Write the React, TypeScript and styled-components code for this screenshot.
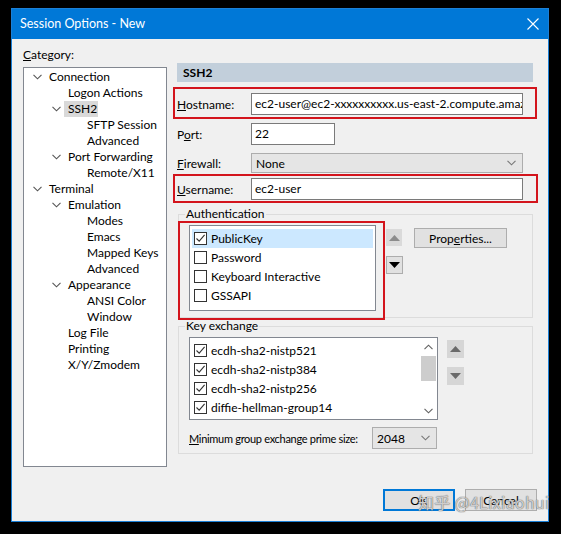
import React from 'react';
import styled, { createGlobalStyle } from 'styled-components';

const Global = createGlobalStyle`
  html, body { margin: 0; padding: 0; background: #000; }
  body {
    width: 561px; height: 534px; overflow: hidden;
    font-family: Lato, "Noto Sans", sans-serif;
    font-size: 12px; color: #000;
  }
  * { box-sizing: border-box; }
`;

const Stage = styled.div`
  width: 561px;
  height: 534px;
  background: #000;
  padding: 8px 0 0 11px;
`;

const Window = styled.div`
  position: relative;
  width: 538px;
  height: 514px;
  border: 1px solid #1c80d6;
  background: #f0f0f0;
  display: flex;
  flex-direction: column;
`;

const TitleBar = styled.div`
  height: 30px;
  flex: none;
  background: #0078d7;
  color: #fff;
  display: flex;
  align-items: center;
  justify-content: space-between;
  padding: 0 9px 1px 8px;
  font-size: 12.5px;
`;

const Body = styled.div`
  flex: 1;
  display: flex;
  flex-direction: column;
  padding: 8px 11px 10px 11px;
`;

const Main = styled.div`
  display: flex;
  gap: 10px;
`;

const LeftCol = styled.div`
  width: 144px;
  display: flex;
  flex-direction: column;
`;

const CategoryLabel = styled.div`
  line-height: 16px;
  height: 20px;
`;

const Tree = styled.div`
  height: 400px;
  background: #fff;
  border: 1px solid #828790;
  padding-top: 1px;
`;

const TreeItem = styled.div<{ $level: number }>`
  display: flex;
  align-items: center;
  height: 16px;
  line-height: 16px;
  padding-left: ${p => 6 + p.$level * 19}px;
  white-space: nowrap;
`;

const ChevronSlot = styled.span`
  width: 14px;
  margin-right: 5px;
  display: flex;
  align-items: center;
  justify-content: center;
  flex: none;
`;

const TreeLabel = styled.span<{ $selected?: boolean }>`
  background: ${p => (p.$selected ? '#d9d9d9' : 'transparent')};
  margin-left: ${p => (p.$selected ? '-4px' : '0')};
  padding: ${p => (p.$selected ? '0 1px 0 4px' : '0')};
`;

const RightCol = styled.div`
  width: 356px;
  margin-top: 16px;
  display: flex;
  flex-direction: column;
`;

const Header = styled.div`
  height: 19px;
  line-height: 19px;
  background: #c2cfdb;
  font-weight: bold;
  padding-left: 6px;
`;

const Row = styled.div`
  display: flex;
  align-items: center;
`;

const Spaced = styled.div<{ $mt: number }>`
  margin-top: ${p => p.$mt}px;
`;

const Highlight = styled.div<{ $t: number; $r: number; $b: number; $l: number; $mt?: number }>`
  position: relative;
  margin-top: ${p => p.$mt ?? 0}px;
  &::after {
    content: '';
    position: absolute;
    top: ${p => -p.$t}px;
    right: ${p => -p.$r}px;
    bottom: ${p => -p.$b}px;
    left: ${p => -p.$l}px;
    border: 2px solid #d3141c;
    pointer-events: none;
  }
`;

const FieldLabel = styled.span`
  width: 74px;
  flex: none;
`;

const TextInput = styled.div<{ $w: number }>`
  width: ${p => p.$w}px;
  height: 22px;
  background: #fff;
  border: 1px solid #7a7a7a;
  line-height: 20px;
  padding-left: 3px;
  white-space: nowrap;
  overflow: hidden;
`;

const Select = styled.div<{ $w: number; $h: number }>`
  width: ${p => p.$w}px;
  height: ${p => p.$h}px;
  background: #e5e5e5;
  border: 1px solid #adadad;
  display: flex;
  align-items: center;
  justify-content: space-between;
  padding: 0 6px 0 4px;
  flex: none;
`;

const Group = styled.fieldset<{ $mt: number; $pb: number }>`
  margin: ${p => p.$mt}px 0 0 1px;
  border: 1px solid #dcdcdc;
  padding: 4px 9px ${p => p.$pb}px 10px;
  min-width: 0;
`;

const Legend = styled.legend`
  padding: 0 1px;
  margin-left: -4px;
  line-height: 14px;
`;

const GroupRow = styled.div`
  display: flex;
  align-items: flex-start;
`;

const ListBox = styled.div<{ $w: number; $h: number }>`
  width: ${p => p.$w}px;
  height: ${p => p.$h}px;
  background: #fff;
  border: 1px solid #828790;
  padding: 3px 2px 0 2px;
  overflow: hidden;
  position: relative;
  flex: none;
`;

const CheckRow = styled.div<{ $selected?: boolean }>`
  height: 19px;
  display: flex;
  align-items: center;
  padding-left: 2px;
  background: ${p => (p.$selected ? '#cce8ff' : 'transparent')};
  white-space: nowrap;
`;

const Box = styled.span`
  width: 13px;
  height: 13px;
  border: 1px solid #333;
  background: #fff;
  margin-right: 4px;
  flex: none;
  display: flex;
  align-items: center;
  justify-content: center;
`;

const ArrowCol = styled.div<{ $ml: number; $gap: number; $mt: number }>`
  display: flex;
  flex-direction: column;
  gap: ${p => p.$gap}px;
  margin-left: ${p => p.$ml}px;
  margin-top: ${p => p.$mt}px;
`;

const ArrowBtn = styled.div<{ $h: number; $w: number; $enabled?: boolean; $bg: string }>`
  width: ${p => p.$w}px;
  height: ${p => p.$h}px;
  background: ${p => p.$bg};
  border: 1px solid ${p => (p.$enabled ? '#adadad' : p.$bg)};
  display: flex;
  align-items: center;
  justify-content: center;
`;

const Button = styled.div<{ $default?: boolean; $w: number; $h: number }>`
  width: ${p => p.$w}px;
  height: ${p => p.$h}px;
  background: #e1e1e1;
  border: ${p => (p.$default ? '2px solid #0078d7' : '1px solid #adadad')};
  display: flex;
  align-items: center;
  justify-content: center;
  flex: none;
`;

const PropsButton = styled(Button)`
  margin-left: 11px;
  margin-top: 3px;
`;

const Scrollbar = styled.div`
  position: absolute;
  top: 0;
  right: 0;
  bottom: 0;
  width: 17px;
  background: #fff;
  display: flex;
  flex-direction: column;
  align-items: center;
`;

const ScrollArrow = styled.div`
  height: 17px;
  width: 17px;
  display: flex;
  align-items: center;
  justify-content: center;
`;

const Thumb = styled.div`
  width: 15px;
  height: 25px;
  background: #cdcdcd;
  margin-top: 1px;
`;

const ScrollSpacer = styled.div`
  flex: 1;
`;

const MinRow = styled.div`
  display: flex;
  align-items: center;
  margin-top: 7px;
  white-space: nowrap;
`;

const MinLabel = styled.span`
  width: 183px;
  flex: none;
  font-size: 11px;
  letter-spacing: -0.3px;
`;

const ButtonRow = styled.div`
  margin-top: auto;
  display: flex;
  justify-content: flex-end;
  gap: 10px;
`;

const Watermark = styled.div`
  position: absolute;
  left: 406px;
  top: 481px;
  font-size: 16px;
  color: rgba(255, 255, 255, 0.7);
  text-shadow: 0 0 1px rgba(90, 90, 90, 0.9), 0 0 1px rgba(90, 90, 90, 0.9);
  font-family: "Noto Sans CJK SC", "Noto Sans", sans-serif;
  white-space: nowrap;
  letter-spacing: 0.3px;
  pointer-events: none;
`;

const Chevron = ({ color = '#555' }: { color?: string }) => (
  <svg width="9" height="6" viewBox="0 0 9 6">
    <polyline points="0.5,0.8 4.5,4.8 8.5,0.8" fill="none" stroke={color} strokeWidth="1.1" />
  </svg>
);

const ChevronUp = ({ color = '#555' }: { color?: string }) => (
  <svg width="9" height="6" viewBox="0 0 9 6">
    <polyline points="0.5,5.2 4.5,1.2 8.5,5.2" fill="none" stroke={color} strokeWidth="1.1" />
  </svg>
);

const Triangle = ({ up, color }: { up?: boolean; color: string }) => (
  <svg width="11" height="6" viewBox="0 0 11 6">
    <polygon points={up ? '0,6 5.5,0 11,6' : '0,0 5.5,6 11,0'} fill={color} />
  </svg>
);

const Check = () => (
  <svg width="11" height="11" viewBox="0 0 11 11">
    <polyline points="1.5,5.5 4.2,8.2 9.6,1.8" fill="none" stroke="#333" strokeWidth="1.1" />
  </svg>
);

const CloseX = () => (
  <svg width="12" height="12" viewBox="0 0 12 12">
    <path d="M0.5 0.5 L11.5 11.5 M11.5 0.5 L0.5 11.5" stroke="#fff" strokeWidth="1.1" />
  </svg>
);

type Node = { label: string; level: number; expanded?: boolean; selected?: boolean };

const tree: Node[] = [
  { label: 'Connection', level: 0, expanded: true },
  { label: 'Logon Actions', level: 1 },
  { label: 'SSH2', level: 1, expanded: true, selected: true },
  { label: 'SFTP Session', level: 2 },
  { label: 'Advanced', level: 2 },
  { label: 'Port Forwarding', level: 1, expanded: true },
  { label: 'Remote/X11', level: 2 },
  { label: 'Terminal', level: 0, expanded: true },
  { label: 'Emulation', level: 1, expanded: true },
  { label: 'Modes', level: 2 },
  { label: 'Emacs', level: 2 },
  { label: 'Mapped Keys', level: 2 },
  { label: 'Advanced', level: 2 },
  { label: 'Appearance', level: 1, expanded: true },
  { label: 'ANSI Color', level: 2 },
  { label: 'Window', level: 2 },
  { label: 'Log File', level: 1 },
  { label: 'Printing', level: 1 },
  { label: 'X/Y/Zmodem', level: 1 },
];

const auth = [
  { label: 'PublicKey', checked: true, selected: true },
  { label: 'Password', checked: false },
  { label: 'Keyboard Interactive', checked: false },
  { label: 'GSSAPI', checked: false },
];

const kex = [
  'ecdh-sha2-nistp521',
  'ecdh-sha2-nistp384',
  'ecdh-sha2-nistp256',
  'diffie-hellman-group14',
  'diffie-hellman-group-exchange-sha256',
];

export default function App() {
  return (
    <Stage>
      <Global />
      <Window>
        <TitleBar>
          <span>Session Options - New</span>
          <CloseX />
        </TitleBar>
        <Body>
          <Main>
            <LeftCol>
              <CategoryLabel>
                <u>C</u>ategory:
              </CategoryLabel>
              <Tree>
                {tree.map((n, i) => (
                  <TreeItem key={i} $level={n.level}>
                    <ChevronSlot>{n.expanded ? <Chevron /> : null}</ChevronSlot>
                    <TreeLabel $selected={n.selected}>{n.label}</TreeLabel>
                  </TreeItem>
                ))}
              </Tree>
            </LeftCol>
            <RightCol>
              <Header>SSH2</Header>
              <Highlight $t={6} $r={4} $b={4} $l={4} $mt={11}>
                <Row>
                  <FieldLabel>
                    <u>H</u>ostname:
                  </FieldLabel>
                  <TextInput $w={272}>ec2-user@ec2-xxxxxxxxxx.us-east-2.compute.amazonaws.com</TextInput>
                </Row>
              </Highlight>
              <Spaced $mt={8}>
                <Row>
                  <FieldLabel>
                    P<u>o</u>rt:
                  </FieldLabel>
                  <TextInput $w={84}>22</TextInput>
                </Row>
              </Spaced>
              <Spaced $mt={8}>
                <Row>
                  <FieldLabel>
                    <u>F</u>irewall:
                  </FieldLabel>
                  <Select $w={272} $h={20}>
                    <span>None</span>
                    <Chevron color="#777" />
                  </Select>
                </Row>
              </Spaced>
              <Highlight $t={4} $r={5} $b={3} $l={4} $mt={5}>
                <Row>
                  <FieldLabel>
                    <u>U</u>sername:
                  </FieldLabel>
                  <TextInput $w={272}>ec2-user</TextInput>
                </Row>
              </Highlight>
              <Group $mt={7} $pb={6}>
                <Legend>Authentication</Legend>
                <GroupRow>
                  <Highlight $t={4} $r={9} $b={9} $l={11}>
                    <ListBox $w={187} $h={86}>
                      {auth.map(a => (
                        <CheckRow key={a.label} $selected={a.selected}>
                          <Box>{a.checked ? <Check /> : null}</Box>
                          {a.label}
                        </CheckRow>
                      ))}
                    </ListBox>
                  </Highlight>
                  <ArrowCol $ml={10} $gap={10} $mt={4}>
                    <ArrowBtn $w={16} $h={17} $bg="#dadada">
                      <Triangle up color="#8c8c8c" />
                    </ArrowBtn>
                    <ArrowBtn $w={17} $h={18} $bg="#e1e1e1" $enabled>
                      <Triangle color="#000" />
                    </ArrowBtn>
                  </ArrowCol>
                  <PropsButton $w={93} $h={20}>
                    Prop<u>e</u>rties...
                  </PropsButton>
                </GroupRow>
              </Group>
              <Group $mt={1} $pb={4}>
                <Legend>Key exchange</Legend>
                <GroupRow>
                  <ListBox $w={249} $h={83}>
                    {kex.map(k => (
                      <CheckRow key={k}>
                        <Box>
                          <Check />
                        </Box>
                        {k}
                      </CheckRow>
                    ))}
                    <Scrollbar>
                      <ScrollArrow>
                        <ChevronUp color="#606060" />
                      </ScrollArrow>
                      <Thumb />
                      <ScrollSpacer />
                      <ScrollArrow>
                        <Chevron color="#606060" />
                      </ScrollArrow>
                    </Scrollbar>
                  </ListBox>
                  <ArrowCol $ml={9} $gap={9} $mt={3}>
                    <ArrowBtn $w={17} $h={18} $bg="#d6d6d6">
                      <Triangle up color="#6a6a6a" />
                    </ArrowBtn>
                    <ArrowBtn $w={17} $h={18} $bg="#d6d6d6">
                      <Triangle color="#6a6a6a" />
                    </ArrowBtn>
                  </ArrowCol>
                </GroupRow>
                <MinRow>
                  <MinLabel>
                    <u>M</u>inimum group exchange prime size:
                  </MinLabel>
                  <Select $w={65} $h={22}>
                    <span>2048</span>
                    <Chevron color="#777" />
                  </Select>
                </MinRow>
              </Group>
            </RightCol>
          </Main>
          <ButtonRow>
            <Button $default $w={72} $h={22}>OK</Button>
            <Button $w={72} $h={22}>Cancel</Button>
          </ButtonRow>
        </Body>
        <Watermark>知乎 @4Lixiaohui</Watermark>
      </Window>
    </Stage>
  );
}
